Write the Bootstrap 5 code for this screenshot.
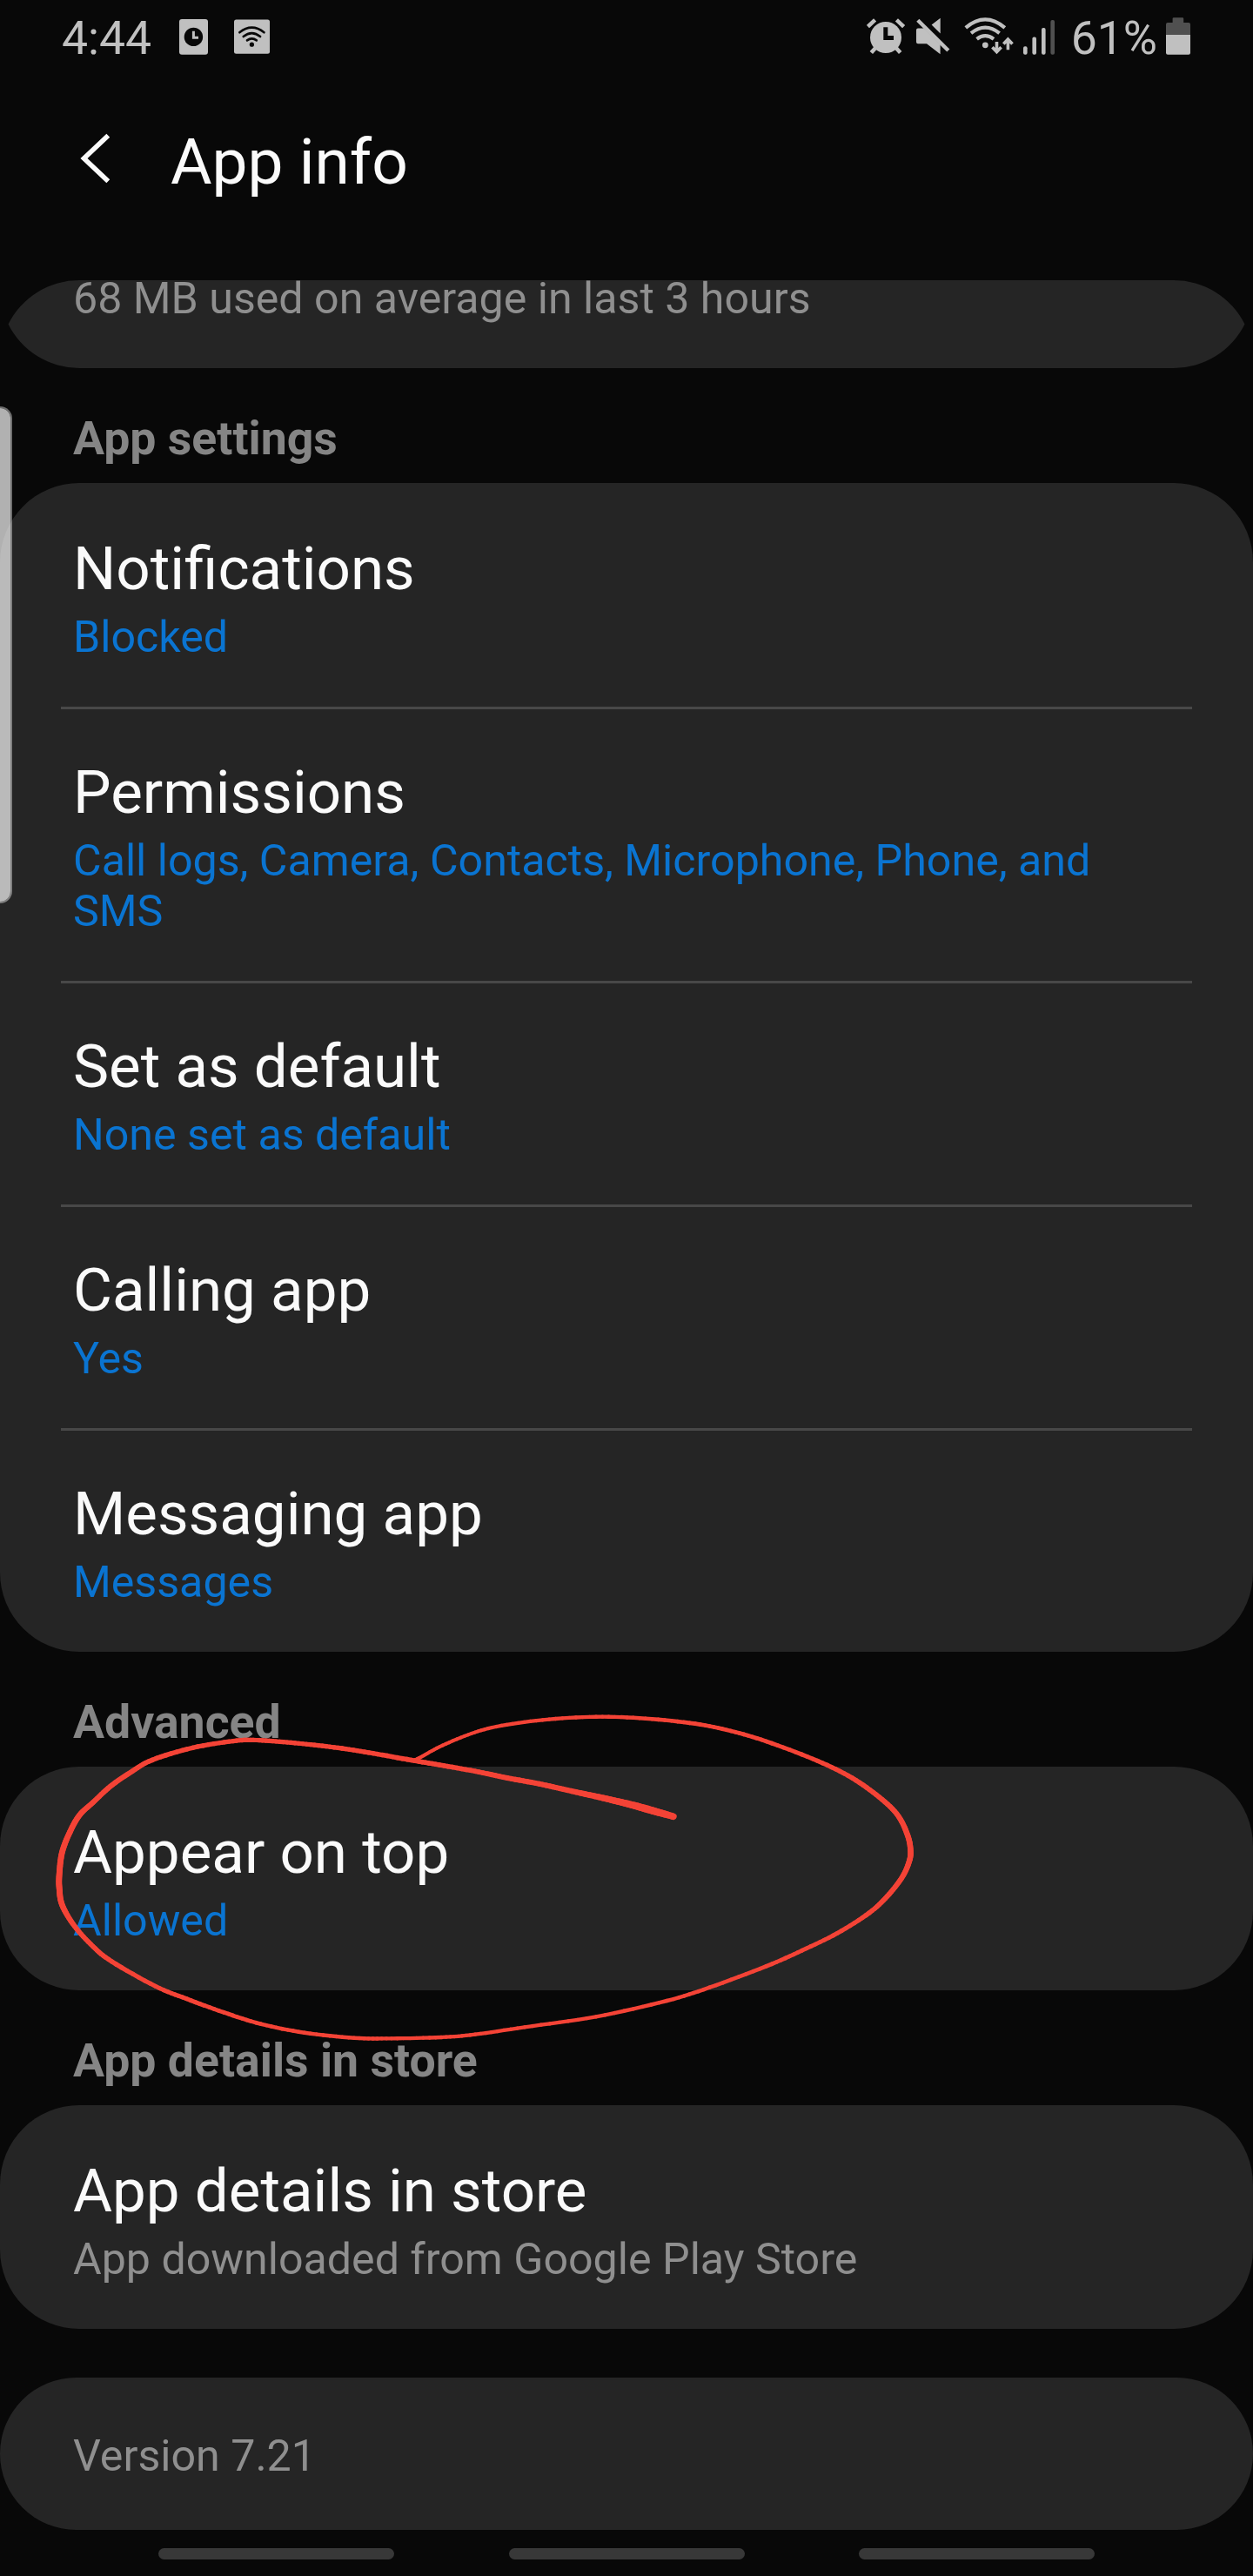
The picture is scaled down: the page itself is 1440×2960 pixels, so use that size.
<!DOCTYPE html>
<html lang="en">
<head>
<meta charset="utf-8">
<meta name="viewport" content="width=device-width, initial-scale=1">
<title>App info</title>
<link href="https://cdn.jsdelivr.net/npm/bootstrap@5.3.0/dist/css/bootstrap.min.css" rel="stylesheet">
<style>
  body { background: #080808; color: #fafafa; font-family: Roboto, "Noto Sans", sans-serif; }
  svg { display: block; flex: none; }
  .screen { width: 1440px; height: 2960px; }
  .statusbar { height: 90px; padding: 0 72px 0 71px; color: #c0c0c0; font-size: 53.5px; line-height: 62px; }
  .statusbar svg { fill: #c0c0c0; }
  .statusbar .ln { fill: none; stroke: #c0c0c0; }
  .statusbar .cut { fill: none; stroke: #080808; }
  .clock-text, .pct-text { margin-top: -2px; }
  .clock-icon { margin-left: 32px; }
  .wifi-badge { margin-left: 30px; }
  .mute-icon, .signal-icon { margin-left: 11px; }
  .wifi-icon { margin-left: 16px; }
  .pct-text { margin-left: 19px; }
  .battery-icon { margin-left: 10px; }
  .appbar { height: 232px; padding: 0 0 0 92px; }
  .appbar h1 { font-size: 73px; line-height: 86px; margin: 53px 0 0 69px; font-weight: 400; }
  .appbar svg { margin-top: 63px; }
  .panel { background: #252525; border-radius: 91px; }
  .panel-cut { height: 101px; border-radius: 0; padding: 0 84px; display: flow-root;
    clip-path: path("M91 0H1349A91 91 0 0 1 1430.5 50.5A91 91 0 0 1 1349 101H91A91 91 0 0 1 9.5 50.5A91 91 0 0 1 91 0Z"); }
  .panel-cut .sub { margin-top: -8px; }
  .entry { padding: 59px 84px 51px; position: relative; }
  .entry + .entry::before { content: ""; position: absolute; left: 70px; right: 70px; top: 0; height: 3px; background: #484848; }
  .entry h2 { font-size: 69.1px; line-height: 80px; margin: 0 0 9px; font-weight: 400; }
  .sub { font-size: 50.15px; line-height: 58px; margin: 0; color: #8f8f8f; }
  .sub-link { color: #0a74d1; }
  .section-label { height: 132px; padding: 50px 84px 0; font-size: 53.6px; line-height: 62px; font-weight: 700; color: #858585; margin: 0; }
  .version-panel { height: 175px; margin-top: 56px; padding: 4px 84px 0; }
  .navhints { height: 53px; padding: 21px 182px 0; }
  .navhints span { width: 271px; height: 13px; background: #383838; border-radius: 7px; }
  .edge-handle { left: 0; top: 467px; width: 14px; height: 571px; border-radius: 0 14px 14px 0; background: rgba(253,253,253,.69);
    background-clip: padding-box; border: 2px solid rgba(253,253,253,.42); border-left: 0; }
  .scribble { left: 0; top: 1940px; stroke: #f44336; stroke-linecap: round; fill: none; pointer-events: none; }
</style>
</head>
<body>
<div class="screen position-relative overflow-hidden d-flex flex-column">
  <header class="statusbar d-flex align-items-center">
    <span class="clock-text">4:44</span>
    <svg class="clock-icon" width="33" height="90" viewBox="206 0 33 90">
      <rect x="206" y="22" width="33" height="40.7" rx="3"/><circle cx="222.4" cy="42.4" r="10.7" fill="#080808"/>
      <path d="M222.4 35.8V43.2H228" class="ln" stroke-width="3"/>
    </svg>
    <svg class="wifi-badge" width="41" height="90" viewBox="269 0 41 90">
      <rect x="269" y="22.5" width="41" height="39.2" rx="2.5"/>
      <g class="cut" stroke-width="2.6" stroke-linecap="round"><path d="M275.3 37.3Q289.4 26 303.5 37.3M279.7 42Q289.4 34.2 299.1 42M284 46.4Q289.4 42.3 294.8 46.4"/></g>
      <circle cx="289.4" cy="51.2" r="2.6" fill="#080808"/>
    </svg>
    <svg class="ms-auto" width="45" height="90" viewBox="995 0 45 90">
      <circle cx="1017" cy="43" r="18"/>
      <path class="ln" stroke-width="4.6" d="M996.4 30.6L1004.6 22.9M1029.4 22.9L1037.6 30.6M1007 53L1000.3 60.6M1027 53L1033.7 60.6"/>
      <path class="cut" stroke-width="5" d="M1016.8 31.2V43.5H1026"/>
    </svg>
    <svg class="mute-icon" width="40" height="90" viewBox="1051 0 40 90">
      <path d="M1054 32.6H1061L1079.6 51V62.3L1064 50.2H1054Q1052 50.2 1052 48.2V34.6Q1052 32.6 1054 32.6ZM1079.7 20.8V38.4L1069.6 28.6Z"/>
      <path class="ln" stroke-width="4.4" d="M1053.8 23.3L1088.8 58"/>
    </svg>
    <svg class="wifi-icon" width="57" height="90" viewBox="1107 0 57 90">
      <g class="ln" stroke-width="4.2"><path d="M1108.8 31.8Q1131.3 13 1153.8 31.8M1115 38.2Q1131.3 25.2 1147.6 38.2M1121.6 44.8Q1131.3 37.4 1141 44.8"/></g>
      <circle cx="1131.3" cy="51.8" r="3.4"/>
      <path class="ln" stroke-width="3.6" d="M1144.5 48V59M1139.4 54.3L1144.5 59.6L1149.6 54.3M1157.4 57.3V46M1152.3 50.6L1157.4 45.2L1162.5 50.6"/>
    </svg>
    <svg class="signal-icon" width="36" height="90" viewBox="1175 0 36 90">
      <rect x="1175" y="53.3" width="4.6" height="9.5" rx="2"/><rect x="1185.4" y="42.6" width="4.6" height="20.2" rx="2"/>
      <rect x="1196" y="32" width="4.6" height="30.8" rx="2"/><rect x="1206.4" y="23" width="4.6" height="39.8" rx="2" fill="#505050"/>
    </svg>
    <span class="pct-text">61%</span>
    <svg class="battery-icon" width="28" height="90" viewBox="1340 0 28 90">
      <path fill="#505050" d="M1340 40V28Q1340 26 1342 26H1347.6V21.5Q1347.6 20.3 1349 20.3H1359Q1360.2 20.3 1360.2 21.5V26H1366Q1368 26 1368 28V40Z"/>
      <path d="M1340 40H1368V60.8Q1368 62.8 1366 62.8H1342Q1340 62.8 1340 60.8Z"/>
    </svg>
  </header>

  <div class="appbar d-flex align-items-start">
    <svg width="35" height="58" viewBox="92 153 35 58"><path d="M124.3 155.8L96.5 182L124.3 208.3" fill="none" stroke="#fafafa" stroke-width="5.6"/></svg>
    <h1>App info</h1>
  </div>

  <main class="flex-grow-1">
    <div class="panel panel-cut"><p class="sub">68 MB used on average in last 3 hours</p></div>

    <h6 class="section-label">App settings</h6>
    <div class="panel">
      <div class="entry"><h2>Notifications</h2><p class="sub sub-link">Blocked</p></div>
      <div class="entry"><h2>Permissions</h2><p class="sub sub-link">Call logs, Camera, Contacts, Microphone, Phone, and SMS</p></div>
      <div class="entry"><h2>Set as default</h2><p class="sub sub-link">None set as default</p></div>
      <div class="entry"><h2>Calling app</h2><p class="sub sub-link">Yes</p></div>
      <div class="entry"><h2>Messaging app</h2><p class="sub sub-link">Messages</p></div>
    </div>

    <h6 class="section-label">Advanced</h6>
    <div class="panel">
      <div class="entry"><h2>Appear on top</h2><p class="sub sub-link">Allowed</p></div>
    </div>

    <h6 class="section-label">App details in store</h6>
    <div class="panel">
      <div class="entry"><h2>App details in store</h2><p class="sub">App downloaded from Google Play Store</p></div>
    </div>

    <div class="panel version-panel d-flex align-items-center"><p class="sub">Version 7.21</p></div>
  </main>

  <nav class="navhints d-flex justify-content-between"><span></span><span></span><span></span></nav>

  <div class="edge-handle position-absolute"></div>
  <svg class="scribble position-absolute" id="scribble" width="1440" height="430" viewBox="0 1940 1440 430"></svg>
</div>
<script src="https://cdn.jsdelivr.net/npm/bootstrap@5.3.0/dist/js/bootstrap.bundle.min.js"></script>
<script>
  // Pen stroke: x, y, pen width; smoothed with a Catmull-Rom spline.
  const pen = [
    [774,2087.3,7.5],[750,2080.6,8.5],[725.7,2073.8,8],[693,2066,7],[652,2057,6.2],[619.6,2049.7,6],[583,2043,6],[546,2035.3,5.6],[505,2028,5.6],[472.7,2022.5,5.6],
    [428.6,2014.7,5.4],[393,2009,5.3],[357,2004.7,5.2],[321.4,2001.3,5.2],[291,1999.4,5.2],[268,2000.6,5.2],[221.4,2008.3,5.4],[175,2022.3,5.6],[150,2036.6,5.8],[126.8,2052.7,6],
    [107,2071,6],[91.4,2085.7,6.5],[80.4,2105,6.6],[71.4,2128.3,6.8],[68.2,2153.3,6.8],[68.2,2170,6.8],[71.6,2189.3,6.6],[85.7,2213.3,5.8],[107,2236.7,5.6],[128.6,2254,5.4],
    [178.6,2282.3,5],[214.3,2296.7,5],[257,2312.3,4.8],[300,2325.7,4.6],[350,2335.7,4.5],[407,2341.7,4.5],[450,2342.3,4.3],[507,2341,4.3],[546,2337.7,4.3],[603,2329.3,4.3],
    [685,2317.3,4.4],[766.5,2299,4.4],[815.5,2283.7,4.5],[880.8,2259.3,4.7],[921.6,2241.3,4.8],[962.4,2221.3,5],[999,2198,5.4],[1019.6,2179,5.8],[1036,2158.3,6],[1044,2141.7,6.3],
    [1046.5,2127.7,6.5],[1042.9,2108.3,6.4],[1030.6,2084.3,6],[1007,2062.3,5.8],[974.7,2040.3,5.4],[933.9,2021,5],[880.8,2001,4.8],[840,1989,4.7],[799,1980.7,4.7],[742,1974.7,4.5],
    [685,1972.7,4.4],[623.7,1976.3,4.3],[570.6,1984,4.2],[538,1993.3,4],[505,2007.3,4],[485,2018.3,4],[475,2023.4,4]
  ];
  const svg = document.getElementById('scribble'), steps = 8;
  const cr = (a, b, c, d, t) => .5 * (2*b + (c-a)*t + (2*a-5*b+4*c-d)*t*t + (3*b-a-3*c+d)*t*t*t);
  for (let i = 0; i < pen.length - 1; i++) {
    const p = [pen[Math.max(i-1, 0)], pen[i], pen[i+1], pen[Math.min(i+2, pen.length-1)]];
    const at = t => [0, 1, 2].map(k => cr(p[0][k], p[1][k], p[2][k], p[3][k], t));
    for (let s = 0; s < steps; s++) {
      const a = at(s / steps), b = at((s + 1) / steps);
      const l = document.createElementNS('http://www.w3.org/2000/svg', 'path');
      l.setAttribute('d', `M${a[0].toFixed(2)} ${a[1].toFixed(2)}L${b[0].toFixed(2)} ${b[1].toFixed(2)}`);
      l.setAttribute('stroke-width', a[2].toFixed(2));
      svg.appendChild(l);
    }
  }
</script>
</body>
</html>
